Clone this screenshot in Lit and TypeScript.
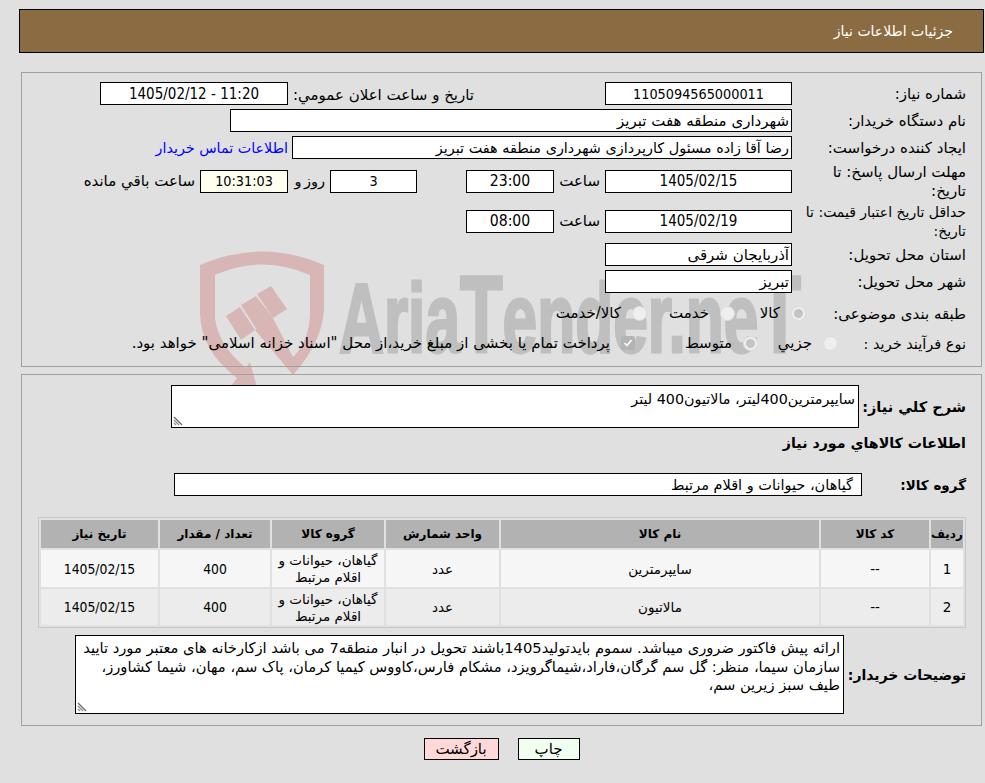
import { LitElement, html, css, svg } from "lit";
import { customElement } from "lit/decorators.js";

const watermark = svg`<svg class="wm" width="985" height="783" viewBox="0 0 985 783">
  <path class="wmr" fill-rule="evenodd" d="M200 265 Q262 238 324 265 L324 310 Q322 342 293 375 L255 330 L273 318 L293 357 Q310 340 310 312 L310 275 Q262 254 215 275 L215 318 Q218 345 246 368 L250 362 L257 387 L232 385 L237 378 Q200 350 200 312 Z"/>
  <path class="wmr" d="M226 316 L240 307 L255 330 L241 340 Z M241 305 L256 296 L273 318 L257 330 Z M257 294 L271 286 L287 309 L273 318 Z"/>
  <text x="339" y="352" class="wmt" textLength="462" lengthAdjust="spacingAndGlyphs">Aria<tspan class="wmb">T</tspan>ender.ne<tspan class="wmb">T</tspan></text>
</svg>`;

const grip = html`<svg class="grip" width="10" height="10" viewBox="0 0 10 10"><path d="M1 1L9 9" stroke="#6a6a6a" stroke-width="1.2"/><path d="M1 4L6 9M1 7L3 9" stroke="#8a8a8a" stroke-width="1.2"/></svg>`;

@customElement("app-root")
export class AppRoot extends LitElement {
  static styles = css`
    :host { display: block; width: 985px; height: 783px; background: #e0e0e0; position: relative; overflow: hidden; font-family: "DejaVu Sans", sans-serif; font-size: 14px; color: #000; direction: rtl; }
    .wm { position: absolute; left: 0; top: 0; pointer-events: none; }
    .wmr { fill: #d8b6b6; }
    .wmt { font-family: "Liberation Sans", sans-serif; font-weight: bold; font-size: 98px; fill: #bfbfbf; stroke: #bfbfbf; stroke-width: 3px; direction: ltr; unicode-bidi: bidi-override; }
    .wmb { font-size: 110px; }
    .page { position: relative; display: flex; flex-direction: column; padding: 9px 1px 0 19px; }
    .title { height: 44px; box-sizing: border-box; background: #8b6b41; border: 1px solid #000; color: #fff; display: flex; align-items: center; padding-right: 30px; flex: none; }
    .panel { border: 1px solid #a0a0a0; margin: 0 2px; box-sizing: border-box; }
    .p1 { margin-top: 19px; height: 295px; padding-top: 7px; }
    .p2 { margin-top: 7px; height: 352px; padding-top: 10px; }
    .row { display: flex; align-items: center; height: 27px; }
    .tall { height: 40px; }
    .rowa { height: 36px; }
    .rowb { height: 24px; }
    .rowta { height: 43px; }
    .rowg { height: 23px; margin-top: 15px; margin-bottom: 21px; }
    .rowd { height: 79px; margin-top: 7px; }
    .lab { width: 189px; padding: 2px 15px 0 0; flex: none; box-sizing: border-box; line-height: 19px; font-size: 15px; }
    .lab.tight { font-size: 15px; }
    .lab.mid { font-size: 14px; }
    .lab.w143 { width: 143px; font-size: 14.5px; }
    .lab.w175 { width: 175px; }
    .box { border: 1px solid #000; background: #fff; height: 23px; box-sizing: border-box; display: flex; align-items: center; justify-content: center; flex: none; white-space: nowrap; font-size: 15px; }
    .num { font-family: "DejaVu Sans Condensed", "Liberation Sans", sans-serif; font-size: 14.3px; }
    .box.dt { font-size: 15px; }
    .box.tm { font-size: 15.6px; }
    .r { justify-content: flex-start; padding-right: 2px; }
    .d { width: 187px; }
    .d8 { width: 188px; }
    .s { width: 88px; }
    .s7 { width: 87px; }
    .cream { background: #fffff0; }
    .w562 { width: 562px; }
    .w500 { width: 500px; font-size: 14.4px; }
    .t1 { margin-right: 131px; width: 186px; font-size: 15px; white-space: nowrap; padding-top: 2px; }
    a { color: #0000ff; text-decoration: none; margin-right: 4px; font-size: 14.3px; white-space: nowrap; }
    .sa { width: 51px; padding-right: 5px; box-sizing: border-box; font-size: 15px; white-space: nowrap; }
    .sp { width: 49px; flex: none; }
    .rz { width: 42px; padding-right: 5px; box-sizing: border-box; font-size: 14.5px; word-spacing: -2px; white-space: nowrap; }
    .rem { padding-right: 5px; font-size: 15px; white-space: nowrap; }
    .radio { width: 15px; height: 15px; border-radius: 50%; background: #efefef; border: 1px solid #dcdcdc; box-sizing: border-box; flex: none; display: inline-flex; align-items: center; justify-content: center; margin-left: -1px; }
    .radio.on::after { content: ""; width: 9px; height: 9px; border-radius: 50%; background: #c4c4c4; }
    .opt { display: flex; align-items: center; gap: 12px; font-size: 15px; white-space: nowrap; flex: none; }
    .o71 { width: 71px; }
    .o88 { width: 88px; }
    .o80 { width: 80px; }
    .o123 { width: 123px; }
    .chk { width: 14px; height: 14px; background: #b4b4b4; border-radius: 2px; flex: none; display: flex; align-items: center; justify-content: center; margin-left: 11px; }
    .pay { font-size: 15px; white-space: nowrap; }
    .b { font-weight: bold; }
    .b1 { width: 122px; font-size: 14.5px; }
    .b2 { width: 119px; font-size: 13.5px; }
    .b3 { width: 137px; font-size: 14px; white-space: nowrap; }
    .head { padding-right: 15px; height: 30px; line-height: 30px; font-size: 14.2px; }
    .area { border: 1px solid #000; background: #fff; box-sizing: border-box; position: relative; flex: none; white-space: nowrap; }
    .a1 { width: 688px; height: 43px; padding: 4px 3px 0; line-height: 18px; font-size: 14.3px; }
    .a2 { width: 769px; height: 79px; padding: 3px 3px 0; line-height: 18.5px; font-size: 14.7px; }
    .grip { position: absolute; left: 1px; bottom: 1px; }
    .g { width: 688px; font-size: 14.5px; padding-right: 8px; }
    table { border-collapse: separate; border-spacing: 2px; border: 1px solid #c8c8c8; margin: 0 15px 0 0; width: 928px; box-sizing: border-box; table-layout: fixed; }
    th { background: #b2b2b2; height: 28px; font-size: 12px; padding: 0; }
    td { text-align: center; padding: 1px 0 0; height: 36px; line-height: 17px; font-size: 13.5px; }
    td.n { font-family: "DejaVu Sans Condensed", "Liberation Sans", sans-serif; font-size: 13.8px; }
    tr.a td { background: #f6f6f6; }
    tr.c td { background: #ececec; height: 35px; }
    .c1 { width: 32px; } .c2 { width: 108px; } .c3 { width: 318px; } .c4 { width: 113px; } .c5 { width: 112px; } .c6 { width: 110px; } .c7 { width: 117px; }
    .btns { display: flex; justify-content: center; gap: 19px; margin-top: 12px; }
    .btn { height: 22px; box-sizing: border-box; border: 1px solid #000; display: flex; align-items: center; justify-content: center; font-size: 15px; }
    .print { width: 62px; background: #f0fff0; }
    .back { width: 75px; background: #ffd8d8; }
  `;
  render() {
    return html`
      ${watermark}
      <div class="page">
        <div class="title">جزئیات اطلاعات نیاز</div>
        <div class="panel p1">
          <div class="row">
            <div class="lab">شماره نیاز:</div><div class="box d num">1105094565000011</div>
            <div class="t1">تاریخ و ساعت اعلان عمومي:</div><div class="box d8 num dt">11:20 - 1405/02/12</div>
          </div>
          <div class="row"><div class="lab">نام دستگاه خریدار:</div><div class="box r w562">شهرداری منطقه هفت تبریز</div></div>
          <div class="row"><div class="lab">ایجاد کننده درخواست:</div><div class="box r w500">رضا آقا زاده مسئول کارپردازی شهرداری منطقه هفت تبریز</div><a href="#">اطلاعات تماس خریدار</a></div>
          <div class="row tall">
            <div class="lab tight">مهلت ارسال پاسخ: تا<br>تاریخ:</div><div class="box d num dt">1405/02/15</div>
            <div class="sa">ساعت</div><div class="box s num tm">23:00</div>
            <div class="sp"></div><div class="box s7 num">3</div>
            <div class="rz">روز و</div><div class="box s cream num">10:31:03</div>
            <div class="rem">ساعت باقي مانده</div>
          </div>
          <div class="row tall">
            <div class="lab mid">حداقل تاریخ اعتبار قیمت: تا تاریخ:</div><div class="box d num dt">1405/02/19</div>
            <div class="sa">ساعت</div><div class="box s num tm">08:00</div>
          </div>
          <div class="row"><div class="lab">استان محل تحویل:</div><div class="box r d">آذربایجان شرقی</div></div>
          <div class="row"><div class="lab">شهر محل تحویل:</div><div class="box r d">تبریز</div></div>
          <div class="row rowa">
            <div class="lab w175">طبقه بندی موضوعی:</div>
            <div class="opt o71"><span class="radio on"></span>کالا</div>
            <div class="opt o88"><span class="radio"></span>خدمت</div>
            <div class="opt"><span class="radio"></span>کالا/خدمت</div>
          </div>
          <div class="row rowb">
            <div class="lab w143">نوع فرآیند خرید :</div>
            <div class="opt o80"><span class="radio"></span>جزیي</div>
            <div class="opt o123"><span class="radio on"></span>متوسط</div>
            <span class="chk"><svg width="10" height="10" viewBox="0 0 10 10"><path d="M1.5 5L4 7.5L8.5 2" fill="none" stroke="#fff" stroke-width="1.6"/></svg></span>
            <div class="pay">پرداخت تمام یا بخشی از مبلغ خرید،از محل "اسناد خزانه اسلامی" خواهد بود.</div>
          </div>
        </div>
        <div class="panel p2">
          <div class="row rowta">
            <div class="lab b b1">شرح کلي نیاز:</div>
            <div class="area a1">سایپرمترین400لیتر، مالاتیون400 لیتر${grip}</div>
          </div>
          <div class="b head">اطلاعات کالاهاي مورد نیاز</div>
          <div class="row rowg">
            <div class="lab b b2">گروه کالا:</div>
            <div class="box r g">گیاهان، حیوانات و اقلام مرتبط</div>
          </div>
          <table>
            <colgroup><col class="c1"><col class="c2"><col class="c3"><col class="c4"><col class="c5"><col class="c6"><col class="c7"></colgroup>
            <tr><th>ردیف</th><th>کد کالا</th><th>نام کالا</th><th>واحد شمارش</th><th>گروه کالا</th><th>تعداد / مقدار</th><th>تاریخ نیاز</th></tr>
            <tr class="a"><td>1</td><td>--</td><td>سایپرمترین</td><td>عدد</td><td>گیاهان، حیوانات و اقلام مرتبط</td><td class="n">400</td><td class="n">1405/02/15</td></tr>
            <tr class="c"><td>2</td><td>--</td><td>مالاتیون</td><td>عدد</td><td>گیاهان، حیوانات و اقلام مرتبط</td><td class="n">400</td><td class="n">1405/02/15</td></tr>
          </table>
          <div class="row rowd">
            <div class="lab b b3">توضیحات خریدار:</div>
            <div class="area a2">ارائه پیش فاکتور ضروری میباشد. سموم بایدتولید1405باشند تحویل در انبار منطقه7 می باشد ازکارخانه های معتبر مورد تایید<br>سازمان سیما، منظر: گل سم گرگان،فاراد،شیماگرویزد، مشکام فارس،کاووس کیمیا کرمان، پاک سم، مهان، شیما کشاورز،<br>طیف سبز زیرین سم،${grip}</div>
          </div>
        </div>
        <div class="btns">
          <div class="btn print">چاپ</div>
          <div class="btn back">بازگشت</div>
        </div>
      </div>
    `;
  }
}
